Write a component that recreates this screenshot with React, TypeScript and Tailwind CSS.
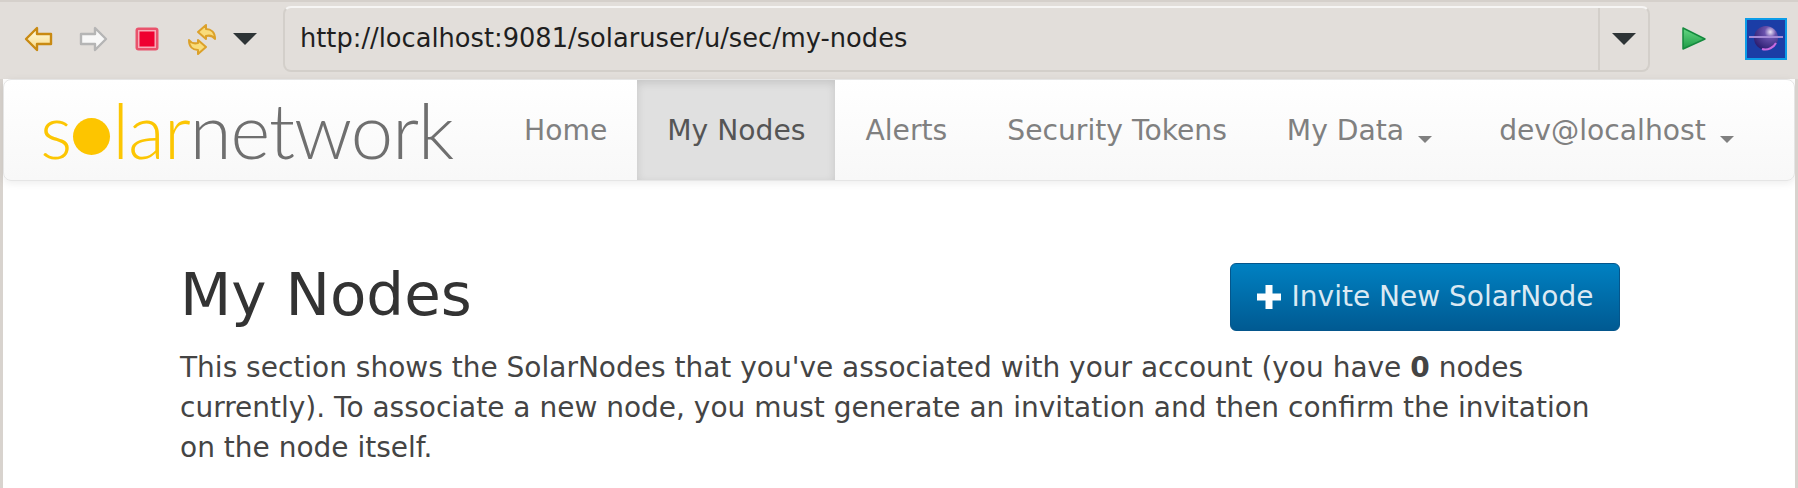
function BackIcon() {
  return (
    <svg width="30" height="26" viewBox="0 0 30 26">
      <defs>
        <linearGradient id="back" x1="0" y1="0" x2="0" y2="1">
          <stop offset="0" stopColor="#fffde8" />
          <stop offset="1" stopColor="#f8d880" />
        </linearGradient>
      </defs>
      <path d="M2 13 L13 2 V8 H27 V18 H13 V24 Z" fill="url(#back)" stroke="#c98a12" strokeWidth="2.4" strokeLinejoin="round" />
    </svg>
  )
}

function ForwardIcon() {
  return (
    <svg width="30" height="26" viewBox="0 0 30 26">
      <path d="M28 13 L17 2 V8 H3 V18 H17 V24 Z" fill="#f8f8f8" stroke="#b5b5b5" strokeWidth="2.4" strokeLinejoin="round" />
    </svg>
  )
}

function StopIcon() {
  return (
    <svg width="24" height="24" viewBox="0 0 24 24">
      <rect x="0.5" y="0.5" width="23" height="23" rx="3" fill="#e9536c" />
      <rect x="3" y="3" width="18" height="18" fill="#f7a9b6" />
      <rect x="4.5" y="4.5" width="15" height="15" fill="#ef0030" />
    </svg>
  )
}

function SyncIcon() {
  return (
    <svg width="30" height="32" viewBox="0 0 30 32">
      <path d="M11 9 L19 2 V6 C24 6 28 9 28 16 C26 13 23 12 19 13 V16 Z" fill="#f9dc7a" stroke="#dca12a" strokeWidth="2" strokeLinejoin="round" />
      <path d="M19 24 L11 31 V27 C6 27 2 24 2 17 C4 20 7 21 11 20 V17 Z" fill="#f9dc7a" stroke="#dca12a" strokeWidth="2" strokeLinejoin="round" />
    </svg>
  )
}

function Arrow() {
  return (
    <svg width="24" height="12" viewBox="0 0 24 12">
      <path d="M0 0 H24 L12 12 Z" fill="#2e3436" />
    </svg>
  )
}

function RunIcon() {
  return (
    <svg width="26" height="26" viewBox="0 0 26 26">
      <defs>
        <linearGradient id="run" x1="0" y1="0" x2="0" y2="1">
          <stop offset="0" stopColor="#66d884" />
          <stop offset="1" stopColor="#1d9a45" />
        </linearGradient>
      </defs>
      <path d="M2 2 L24 13 L2 23 Z" fill="url(#run)" stroke="#158a3e" strokeWidth="1.5" strokeLinejoin="round" />
    </svg>
  )
}

function EclipseIcon() {
  return (
    <svg width="42" height="42" viewBox="0 0 42 42">
      <defs>
        <radialGradient id="planet" cx="0.68" cy="0.25" r="0.8">
          <stop offset="0" stopColor="#ece4f7" />
          <stop offset="0.3" stopColor="#6a52ad" />
          <stop offset="1" stopColor="#2b1d70" />
        </radialGradient>
      </defs>
      <rect x="1" y="1" width="40" height="40" fill="#1b3da6" stroke="#0c9ce8" strokeWidth="2" />
      <circle cx="21" cy="20" r="12" fill="url(#planet)" />
      <rect x="4" y="18" width="34" height="2" fill="#a58ad6" />
      <path d="M17 31 C23 33 29 29 31 25" stroke="#c86be0" strokeWidth="2" fill="none" />
    </svg>
  )
}

function PlusIcon() {
  return (
    <svg className="mr-[11px]" width="24" height="24" viewBox="0 0 24 24">
      <path d="M8.5 0 H15.5 V8.5 H24 V15.5 H15.5 V24 H8.5 V15.5 H0 V8.5 H8.5 Z" fill="#ffffff" />
    </svg>
  )
}

function Caret() {
  return <span className="ml-[14px] mr-[7px] inline-block translate-y-[8px] border-x-[7px] border-t-[7px] border-x-transparent border-t-[#808080]" />
}

const navItems = [
  { label: "Home" },
  { label: "My Nodes", active: true },
  { label: "Alerts" },
  { label: "Security Tokens" },
  { label: "My Data", caret: true },
  { label: "dev@localhost", caret: true },
]

export default function App() {
  return (
    <div className="flex h-[488px] w-[1798px] flex-col overflow-hidden bg-white font-['DejaVu_Sans',sans-serif]">
      <div className="flex h-[79px] items-center border-t-2 border-[#d5d0cb] bg-[#e2deda] pb-[3px] pl-[24px]">
        <div className="flex w-[259px] items-center">
          <BackIcon />
          <div className="ml-6"><ForwardIcon /></div>
          <div className="ml-[27px]"><StopIcon /></div>
          <div className="ml-[28px]"><SyncIcon /></div>
          <div className="ml-[16px]"><Arrow /></div>
        </div>
        <div className="flex h-[66px] w-[1367px] items-center rounded-lg border-2 border-[#d3cfca] border-t-white/70">
          <span className="flex-1 pl-[15px] text-[25.7px] leading-none text-[#1f1f1f]">http://localhost:9081/solaruser/u/sec/my-nodes</span>
          <div className="flex h-full w-[50px] items-center justify-center border-l-2 border-[#d3cfca]"><Arrow /></div>
        </div>
        <div className="ml-[31px]"><RunIcon /></div>
        <div className="ml-[38px]"><EclipseIcon /></div>
      </div>
      <div className="flex flex-1">
        <div className="w-[3px] self-stretch bg-[#d8d3ce]" />
        <div className="flex-1">
          <div className="flex h-[102px] items-stretch rounded-lg border border-[#e5e5e5] bg-gradient-to-b from-white to-[#f8f8f8] shadow-[0_2px_8px_rgba(0,0,0,0.08)]">
            <div className="flex w-[490px] items-center pl-[36px] font-['Lato',sans-serif] text-[76px] font-light leading-none tracking-[-1px]">
              <span className="text-[#fcc603]">s</span>
              <span className="mx-[2px] inline-block size-[37px] translate-y-[6px] rounded-full bg-[#fdc500]" />
              <span className="text-[#fcc603]">lar</span>
              <span className="text-[#6f6f6f]">network</span>
            </div>
            <nav className="flex items-stretch">
              {navItems.map((item) => (
                <a
                  key={item.label}
                  className={`flex items-center px-[30px] pt-[2px] text-[28.2px] leading-none ${item.active ? "bg-[#e0e0e0] text-[#555555] shadow-[inset_0_3px_8px_rgba(0,0,0,0.12)]" : "text-[#808080]"}`}
                >
                  {item.label}
                  {item.caret && <Caret />}
                </a>
              ))}
            </nav>
          </div>
          <div className="ml-[177px] mt-[82px] w-[1440px]">
            <div className="flex items-start justify-between">
              <h1 className="text-[59.5px] font-normal leading-[64px] text-[#333333]">My Nodes</h1>
              <button className="flex h-[68px] w-[390px] items-center justify-center rounded-md border border-[#04568c] bg-gradient-to-b from-[#0081c2] to-[#005a92] text-[28px] text-[#dbe9f3]">
                <PlusIcon />
                Invite New SolarNode
              </button>
            </div>
            <p className="mt-[17px] text-[28px] leading-[40px] text-[#444444]">
              This section shows the SolarNodes that you've associated with your account (you have <b>0</b> nodes currently). To associate a new node, you must generate an invitation and then confirm the invitation on the node itself.
            </p>
          </div>
        </div>
        <div className="w-[3px] self-stretch bg-[#d8d3ce]" />
      </div>
    </div>
  )
}
